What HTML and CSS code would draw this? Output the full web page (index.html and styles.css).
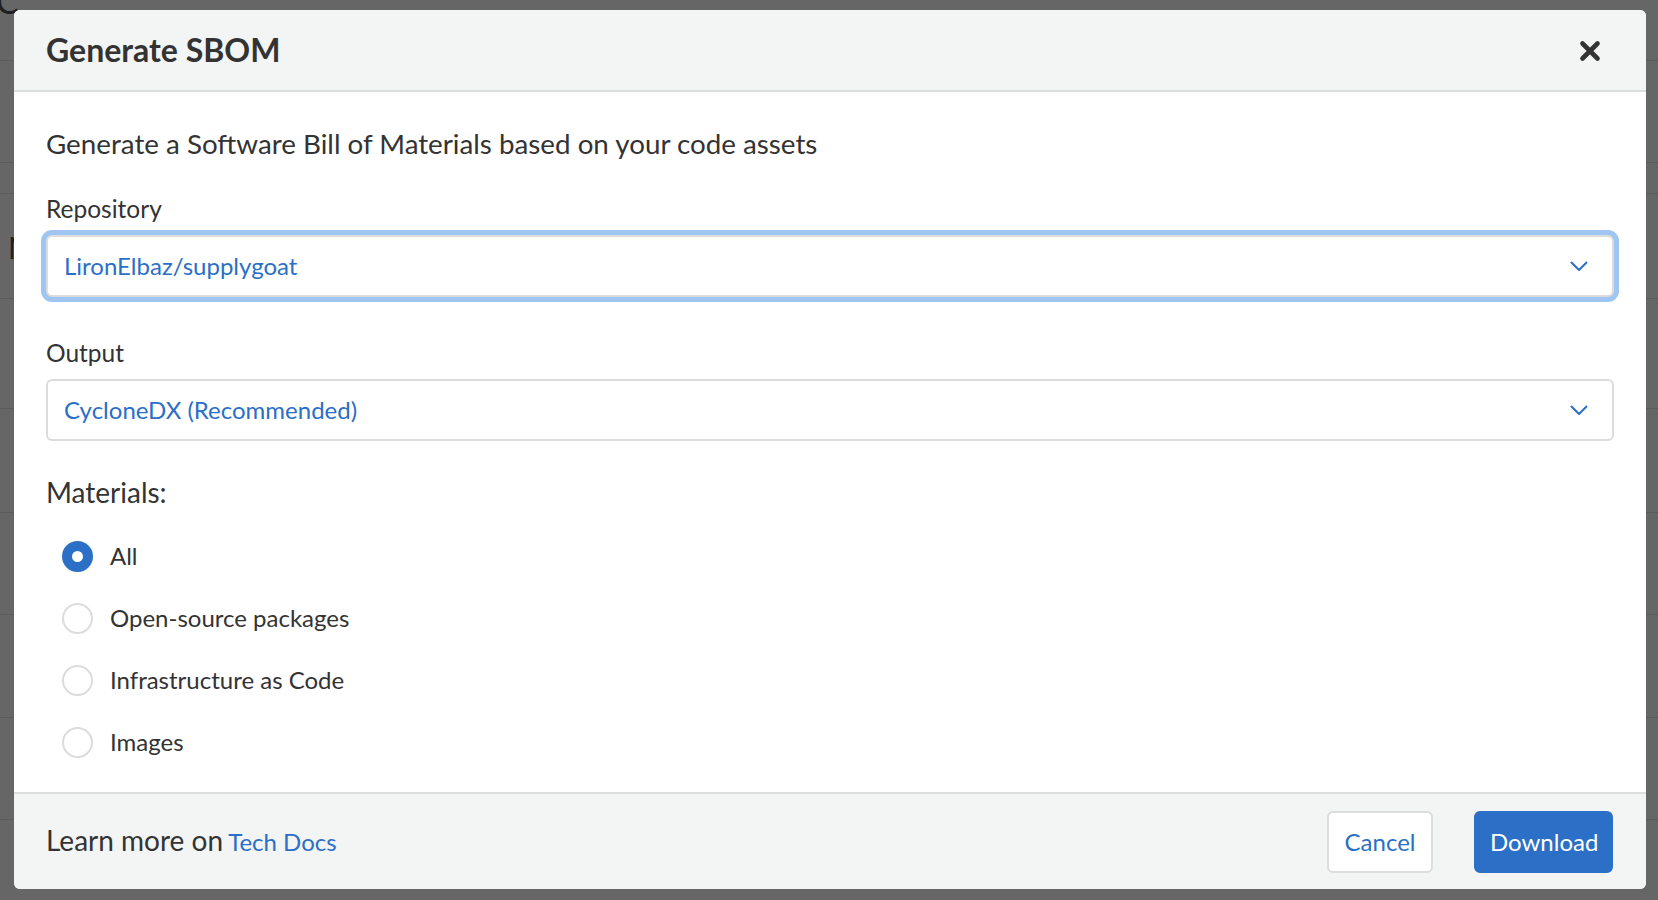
FILE: index.html
```html
<!DOCTYPE html>
<html lang="en">
<head>
<meta charset="utf-8">
<title>Generate SBOM</title>
<link rel="stylesheet" href="styles.css">
</head>
<body>
<div class="backdrop" aria-hidden="true">
  <div class="bg-row r1"><span class="bg-glyph top">C</span></div>
  <div class="bg-row r2"></div>
  <div class="bg-row r3"></div>
  <div class="bg-row r4"><span class="bg-glyph mid">N</span></div>
  <div class="bg-row r5"></div>
  <div class="bg-row r6"></div>
  <div class="bg-row r7"></div>
  <div class="bg-row r8"></div>
  <div class="bg-row r9"></div>
</div>
<div class="modal" role="dialog" aria-labelledby="modal-title">
  <header class="modal-header">
    <h2 id="modal-title" class="modal-title">Generate SBOM</h2>
    <button class="close-btn" aria-label="Close">
      <svg width="22" height="22" viewBox="0 0 22 22"><path d="M3.5 3.5 L18.5 18.5 M18.5 3.5 L3.5 18.5" stroke="#333" stroke-width="4.6" stroke-linecap="round" fill="none"/></svg>
    </button>
  </header>
  <main class="modal-body">
    <p class="intro">Generate a Software Bill of Materials based on your code assets</p>
    <div class="field">
      <label class="field-label">Repository</label>
      <div class="select focused">
        <span class="select-value">LironElbaz/supplygoat</span>
        <svg class="chevron" width="18" height="11" viewBox="0 0 18 11"><path d="M1.5 1.5 L9 9 L16.5 1.5" stroke="#2b6fc6" stroke-width="2" fill="none" stroke-linecap="round" stroke-linejoin="round"/></svg>
      </div>
    </div>
    <div class="field">
      <label class="field-label">Output</label>
      <div class="select">
        <span class="select-value">CycloneDX (Recommended)</span>
        <svg class="chevron" width="18" height="11" viewBox="0 0 18 11"><path d="M1.5 1.5 L9 9 L16.5 1.5" stroke="#2b6fc6" stroke-width="2" fill="none" stroke-linecap="round" stroke-linejoin="round"/></svg>
      </div>
    </div>
    <div class="materials">
      <div class="materials-title">Materials:</div>
      <div class="radio-list">
        <div class="radio-row"><span class="radio checked"></span><span class="radio-label">All</span></div>
        <div class="radio-row"><span class="radio"></span><span class="radio-label">Open-source packages</span></div>
        <div class="radio-row"><span class="radio"></span><span class="radio-label">Infrastructure as Code</span></div>
        <div class="radio-row"><span class="radio"></span><span class="radio-label">Images</span></div>
      </div>
    </div>
  </main>
  <footer class="modal-footer">
    <div class="learn">Learn more on<span class="gap"> </span><a class="link" href="#">Tech Docs</a></div>
    <div class="actions">
      <button class="btn btn-secondary">Cancel</button>
      <button class="btn btn-primary">Download</button>
    </div>
  </footer>
</div>
</body>
</html>
```
FILE: styles.css
```css
* { box-sizing: border-box; }
html, body { margin: 0; padding: 0; }
body {
  width: 1658px;
  height: 900px;
  overflow: hidden;
  background: #666666;
  font-family: Lato, "Open Sans", sans-serif;
  color: #333333;
  position: relative;
}
.backdrop {
  position: absolute;
  left: 0; top: 0;
  width: 1658px; height: 900px;
  display: flex;
  flex-direction: column;
}
.bg-row { border-bottom: 1px solid #5b5b5b; position: relative; flex: none; }
.r1 { height: 61px; }
.r2 { height: 102px; }
.r3 { height: 31px; }
.r4 { height: 105px; }
.r5 { height: 110px; }
.r6 { height: 104px; }
.r7 { height: 102px; }
.r8 { height: 103px; }
.r9 { height: 102px; }
.bg-glyph { position: absolute; color: #202020; font-size: 30px; line-height: 1; }
.bg-glyph.top { left: -4px; top: -16px; font-size: 34px; }
.bg-glyph.mid { left: 8px; top: 38px; font-size: 30px; }

.modal {
  position: relative;
  margin: 10px 0 0 14px;
  width: 1632px;
  height: 879px;
  background: #ffffff;
  border-radius: 6px;
  overflow: hidden;
  display: flex;
  flex-direction: column;
}
.modal-header {
  height: 82px;
  flex: none;
  background: #f3f4f4;
  border-bottom: 2px solid #dcdddd;
  display: flex;
  align-items: center;
  justify-content: space-between;
  padding: 0 45px 0 32px;
}
.modal-title {
  margin: 0;
  font-size: 32px;
  font-weight: 700;
  line-height: 38px;
  color: #333333;
}
.close-btn {
  border: 0;
  background: none;
  padding: 0;
  width: 22px;
  height: 22px;
  margin-top: 2px;
  display: flex;
}
.modal-body {
  flex: 1;
  padding: 35px 32px 0 32px;
}
.intro {
  margin: 0 0 34px 0;
  font-size: 27.75px;
  line-height: 34px;
}
.field { margin-bottom: 42px; }
.field-label {
  display: block;
  font-size: 24.5px;
  line-height: 28px;
  margin-bottom: 12px;
}
.select {
  height: 62px;
  border: 2px solid #dcdcdc;
  border-radius: 6px;
  background: #ffffff;
  display: flex;
  align-items: center;
  justify-content: space-between;
  padding: 0 24px 0 16px;
}
.select.focused { box-shadow: 0 0 0 5px #9fc6f2; }
.select-value {
  color: #2b6fc6;
  font-size: 24px;
  line-height: 30px;
}
.chevron { display: block; }
.field + .materials { margin-top: -8px; }
.materials-title {
  font-size: 28px;
  line-height: 34px;
  margin-bottom: 16px;
}
.radio-row {
  height: 62px;
  display: flex;
  align-items: center;
  padding-left: 16px;
}
.radio {
  width: 31px;
  height: 31px;
  border-radius: 50%;
  border: 2px solid #dcdcdc;
  background: #ffffff;
  margin-right: 17px;
  flex: none;
}
.radio.checked {
  border: 10px solid #2b6fc6;
}
.radio-label {
  font-size: 24px;
  line-height: 30px;
}
.modal-footer {
  height: 97px;
  flex: none;
  background: #f3f4f4;
  border-top: 2px solid #dcdddd;
  display: flex;
  align-items: center;
  justify-content: space-between;
  padding: 0 33px 0 32px;
}
.learn {
  font-size: 28px;
  line-height: 34px;
}
.gap { font-size: 20px; }
.link { color: #2b6fc6; text-decoration: none; font-size: 24px; }
.actions { display: flex; gap: 41px; }
.btn {
  height: 62px;
  border-radius: 6px;
  font-family: Lato, "Open Sans", sans-serif;
  font-size: 24px;
  padding: 0 14px;
}
.btn-secondary {
  width: 106px;
  background: #ffffff;
  border: 2px solid #dcdcdc;
  color: #2b6fc6;
}
.btn-primary {
  width: 139px;
  background: #2b6fc6;
  border: 2px solid #2b6fc6;
  color: #ffffff;
}
```
